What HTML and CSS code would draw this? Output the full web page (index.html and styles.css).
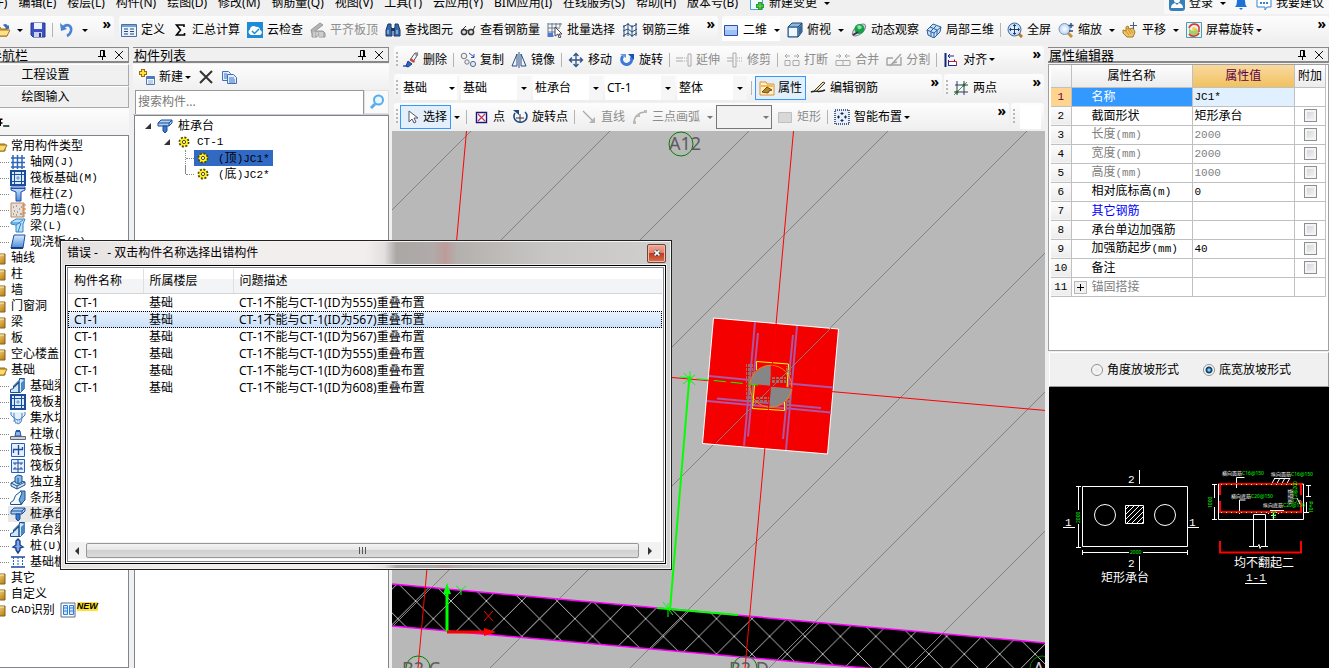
FILE: index.html
```html
<!DOCTYPE html>
<html lang="zh-CN">
<head>
    <meta charset="UTF-8">
    <title>构件列表</title>
    <link rel="stylesheet" href="styles.css">
</head>
<body>

<!-- icon library -->
<svg class="sprite" aria-hidden="true">
    <defs>
        <linearGradient id="gBlue" x1="0" y1="0" x2="0" y2="1"><stop offset="0" stop-color="#d8ecff"/><stop offset="1" stop-color="#4a8ad8"/></linearGradient>
        <linearGradient id="gGold" x1="0" y1="0" x2="1" y2="1"><stop offset="0" stop-color="#ffe9a0"/><stop offset="1" stop-color="#b87808"/></linearGradient>
        <radialGradient id="gGlass"><stop offset="0" stop-color="#ffffff"/><stop offset="1" stop-color="#b4d4f4"/></radialGradient>
    </defs>
    <symbol id="i-open" viewBox="0 0 16 16"><path d="M1 14V5h5l1 2h6v7z" fill="#f0c050" stroke="#a87010"/><path d="M1 14l3-6h12l-3 6z" fill="#ffe28a" stroke="#a87010"/><path d="M9 3c2-2 4-1 5 1l1-1v4h-4l1-1" fill="#3a6cc0"/></symbol>
    <symbol id="i-save" viewBox="0 0 16 16"><path d="M1 1h14v14H3l-2-2z" fill="#3c50c0" stroke="#283890"/><path d="M4 1h8v6H4z" fill="#eef2ff"/><path d="M4 10h8v5H4z" fill="#c8d0f0"/><path d="M9 11h2v4H9z" fill="#283890"/></symbol>
    <symbol id="i-undo" viewBox="0 0 16 16"><path d="M4 5c5-4 9-1 8 4-.5 2-2 4-4 5" fill="none" stroke="#4a82d4" stroke-width="2.6"/><path d="M1 1l1 8 6-2z" fill="#4a82d4"/></symbol>
    <symbol id="i-define" viewBox="0 0 16 16"><path d="M.5 2.5h15v12H.5z" fill="#e8f2fc" stroke="#4870a8"/><path d="M1 3h14v2H1z" fill="#7aa0d0"/><path d="M3 7h4M3 9.500h4M3 12h4M9 7h4M9 9.500h4M9 12h4" stroke="#284878"/></symbol>
    <symbol id="i-sum" viewBox="0 0 16 16"><path d="M12 5V3H4.500l4 5-4 5H12.500v-2" fill="none" stroke="#000" stroke-width="1.600"/></symbol>
    <symbol id="i-cloud" viewBox="0 0 16 16"><path d="M0 0h16v16H0z" fill="#1c8cd8"/><path d="M4 13a3 3 0 0 1-1-5.500A3.500 3.500 0 0 1 9 5a3 3 0 0 1 4 3 2.600 2.600 0 0 1 0 5z" fill="#fff"/><path d="M5 9l2.500 2.500L12 7" fill="none" stroke="#1c8cd8" stroke-width="1.500"/></symbol>
    <symbol id="i-slab" viewBox="0 0 16 16"><path d="M1 8l9-7 3 2-8 6h8l2 2v4H9v-2H7v2H2v-3z" fill="#b4b4b4" stroke="#989898"/><path d="M4 10v5M7 10v4M10 10v5M12 10v5" stroke="#e4e4e4"/></symbol>
    <symbol id="i-find" viewBox="0 0 16 16"><path d="M3 2h3v3l1 2v7H1V8zM10 2h3l2 6v6H9V7l1-2z" fill="#3868a8" stroke="#183868"/><path d="M6 6h4v3H6z" fill="#183868"/><path d="M3 8v4M12 8v4" stroke="#c8e0f8"/></symbol>
    <symbol id="i-glasses" viewBox="0 0 16 16"><circle cx="4" cy="10" r="2.600" fill="#dde" stroke="#333" stroke-width="1.500"/><circle cx="11" cy="10" r="2.600" fill="#dde" stroke="#333" stroke-width="1.500"/><path d="M6 9q1.500-1 3 0M2 8l4-4M13 8l2-4" fill="none" stroke="#333"/></symbol>
    <symbol id="i-batch" viewBox="0 0 16 16"><path d="M1 1v14M5 1v14M9 1v8M13 1v4M1 2h14M1 6h12M1 10h8M1 14h6" stroke="#68788c"/><path d="M1 11h5v4H1z" fill="#4878e0"/><path d="M8 5l7 7h-3l2 3-2 1-1-4-3 2z" fill="#fff" stroke="#445"/></symbol>
    <symbol id="i-rebar3d" viewBox="0 0 16 16"><path d="M2 3v12M6 1v13M10 3v12M14 1v13M1 5l5-3 4 3 5-3M1 9l5-2 4 3 5-3M1 14l5-3 4 3 5-3" fill="none" stroke="#284c80"/></symbol>
    <symbol id="i-rect" viewBox="0 0 16 16"><path d="M1.500 3.500h13v10h-13z" fill="#9cc0f8" stroke="#3050a8"/><path d="M2 4h12v4H2z" fill="#dceaff" opacity=".6"/></symbol>
    <symbol id="i-cube" viewBox="0 0 16 16"><path d="M1 5l4-4h10v9l-4 5H1z" fill="#88b8e0" stroke="#204870"/><path d="M1 5h10v10M11 5l4-4" fill="none" stroke="#204870"/><path d="M2 6h8v8H2z" fill="#f0f8ff"/><path d="M12 5l3-3v8l-3 4z" fill="#386898"/></symbol>
    <symbol id="i-orbit" viewBox="0 0 16 16"><ellipse cx="8" cy="8" rx="8" ry="4" transform="rotate(-40 8 8)" fill="#d4d8dc" stroke="#889"/><circle cx="8.500" cy="7" r="5" fill="#18a048"/><path d="M6 4q3-2 5 1-1 3-4 2" fill="#8ce0a0"/><path d="M2 13l5-3" stroke="#334" stroke-width="2"/></symbol>
    <symbol id="i-local" viewBox="0 0 16 16"><path d="M1 8l6-6 8 3-1 5-6 6-6-3z" fill="#c8e0f8" stroke="#2860a0"/><path d="M1 8l7 3 7-6M4 5l7 3v5M8 11v5M5 10v4M10 4l-6 6" fill="none" stroke="#2860a0"/></symbol>
    <symbol id="i-full" viewBox="0 0 16 16"><path d="M11 11l4 4" stroke="#b87828" stroke-width="3"/><circle cx="7.500" cy="7.500" r="6.500" fill="url(#gGlass)" stroke="#4c6c98"/><path d="M7.500 3v9M3 7.500h9M6 4l1.500-1.500L9 4M6 11l1.500 1.500L9 11M4 6L2.500 7.500 4 9M11 6l1.500 1.500L11 9" fill="none" stroke="#183c70"/></symbol>
    <symbol id="i-zoom" viewBox="0 0 16 16"><path d="M10 11l4 4" stroke="#c89038" stroke-width="3"/><circle cx="6.500" cy="7" r="5.500" fill="url(#gGlass)" stroke="#8098b8"/><path d="M13 1v5M10.500 3.500h5M11 9h4" stroke="#284c88" stroke-width="1.400"/></symbol>
    <symbol id="i-pan" viewBox="0 0 16 16"><path d="M1 8l3 1V5l2-1 1 3 4-1 2 4-2 5H5L1 11z" fill="#f0c468" stroke="#a87820"/><path d="M3 8l4 5M5 6l4 6M8 7l3 4" stroke="#c89030"/><path d="M11.500 0v7M8 3.500h7" stroke="#486080"/></symbol>
    <symbol id="i-rotscr" viewBox="0 0 16 16"><path d="M.5.500h15v15H.5z" fill="#e8f4f0" stroke="#48a0b8"/><path d="M3 13V6l3 3 4-3 3 4v3z" fill="#a0d070"/><path d="M3 6c2-5 8-5 10-1v5M13 11c-2 4-8 4-10 1" fill="none" stroke="#e03838" stroke-width="1.600"/><circle cx="8" cy="7" r="2" fill="#f8d048"/></symbol>
    <symbol id="i-brush" viewBox="0 0 16 16"><path d="M0 14h6" stroke="#2858b8" stroke-width="1.500"/><path d="M7 8l5-7 3 1-5 8z" fill="#f8f8ff" stroke="#556"/><path d="M12 1l3-1v3l-2 2z" fill="#889"/><path d="M8 6l4 3-1 2-4-3z" fill="#d04838"/><path d="M5 9l4 3-4 3-2-1z" fill="#2c64d0" stroke="#183c80"/></symbol>
    <symbol id="i-copy2" viewBox="0 0 16 16"><circle cx="4" cy="4" r="2.800" fill="#eee" stroke="#778"/><circle cx="7" cy="10" r="2.200" fill="#eee" stroke="#778"/><circle cx="13" cy="12" r="2.600" fill="#dde8f8" stroke="#556c90"/><path d="M9 1l5 4M14 2v3.500h-3" fill="none" stroke="#2858a8"/></symbol>
    <symbol id="i-mirror" viewBox="0 0 16 16"><path d="M6 2v12H1zM10 2v12h5z" fill="#eef4ff" stroke="#284c80"/><path d="M8 0v16" stroke="#284c80"/></symbol>
    <symbol id="i-move" viewBox="0 0 16 16"><path d="M8 2v12M2 8h12M5.500 4L8 1.500 10.500 4M5.500 12L8 14.500 10.500 12M4 5.500L1.500 8 4 10.500M12 5.500L14.500 8 12 10.500" fill="none" stroke="#2c548c" stroke-width="1.300"/></symbol>
    <symbol id="i-rotate" viewBox="0 0 16 16"><path d="M4 4a5 5 0 1 0 8 1" fill="none" stroke="#3c78d8" stroke-width="3"/><path d="M9 2h6v6z" fill="#1c50b0"/><path d="M1 2h6v4z" fill="#6898e0"/></symbol>
    <symbol id="i-extend" viewBox="0 0 16 16"><path d="M0 6h7M0 9h7M12 2v12h3V2z" fill="none" stroke="#aaa"/><path d="M8 6h3M8 9h3" stroke="#aaa" stroke-dasharray="1 1"/></symbol>
    <symbol id="i-trim" viewBox="0 0 16 16"><path d="M6 1v14h3V1zM0 6h6M0 9h6" fill="none" stroke="#aaa"/><path d="M10 6h6M10 9h6" stroke="#aaa" stroke-dasharray="1 1"/></symbol>
    <symbol id="i-break" viewBox="0 0 16 16"><path d="M1 4h5M10 4h5M3 2L1 4l2 2M13 2l2 2-2 2M1 8.500h5v5H1zM9 8.500h6v5H9z" fill="none" stroke="#aaa"/></symbol>
    <symbol id="i-join" viewBox="0 0 16 16"><path d="M1 4h5M10 4h5M4 2l2 2-2 2M12 2l-2 2 2 2M1 8.500h14v5H1zM8 8v5" fill="none" stroke="#aaa"/></symbol>
    <symbol id="i-split" viewBox="0 0 16 16"><path d="M1 6h6M1 6v7h14V5M4 14L15 2M7 11l4-1" fill="none" stroke="#a4a4a4" stroke-width="1.400"/></symbol>
    <symbol id="i-align" viewBox="0 0 16 16"><path d="M2.500 1v14" stroke="#102878" stroke-width="2"/><path d="M5.500 9.500h8v4h-8z" fill="#fff" stroke="#c02038"/><path d="M5 4h6M7 2L5 4l2 2M5.500 8v5.500h8M11.500 7.500v2" fill="none" stroke="#182890"/></symbol>
    <symbol id="i-props" viewBox="0 0 16 16"><path d="M1 2h6l1 2h7v11H1z" fill="#fff0d0" stroke="#e09028"/><path d="M2 5h12v2H2z" fill="#f8b850"/><path d="M3 12l5-5 5 3-3 1-1 2z" fill="#b88820" stroke="#6c4c10"/></symbol>
    <symbol id="i-pencil" viewBox="0 0 16 16"><path d="M1 12c4-2 9 1 14-2" fill="none" stroke="#222" stroke-width="1.500"/><path d="M4 11l9-9 2 1-8 8z" fill="#e8dcb0" stroke="#443820"/></symbol>
    <symbol id="i-twopt" viewBox="0 0 16 16"><path d="M4 1v14M11 1v14M1 12h14M2 5h13" stroke="#2c3c60"/><path d="M1 15L14 2" stroke="#40a040"/><circle cx="4" cy="12" r="1.500" fill="#286828"/><circle cx="11" cy="5" r="1.500" fill="#286828"/></symbol>
    <symbol id="i-arrow" viewBox="0 0 16 16"><path d="M5 2v11l3-3 2 4 2-1-2-4h4z" fill="#fff" stroke="#556"/></symbol>
    <symbol id="i-point" viewBox="0 0 16 16"><path d="M3.500 3.500h10v10h-10z" fill="#fff" stroke="#181878" stroke-width="1.400"/><path d="M5 5l7 7M12 5l-7 7" stroke="#c83060" stroke-width="1.300"/></symbol>
    <symbol id="i-rotpt" viewBox="0 0 16 16"><path d="M3 4a6.500 6 0 1 0 10-1" fill="none" stroke="#204880" stroke-width="1.600"/><path d="M1 1h6v5z" fill="#204880"/><path d="M8 5v8M4 9h8" stroke="#334"/></symbol>
    <symbol id="i-line" viewBox="0 0 16 16"><path d="M2 2l10 10" stroke="#a8a8a8" stroke-width="1.200"/><path d="M14 14H8l6-6z" fill="#b4b4b4"/></symbol>
    <symbol id="i-arc" viewBox="0 0 16 16"><path d="M2 14c0-6 4-11 12-11" fill="none" stroke="#b0b0b0" stroke-width="1.500"/><path d="M1 12h3v3H1zM5 5h3v3H5zM12 1h3v3h-3z" fill="#bbb"/></symbol>
    <symbol id="i-rectg" viewBox="0 0 16 16"><path d="M1.500 3.500h13v10h-13z" fill="#d8d8d8" stroke="#c0c0c0"/></symbol>
    <symbol id="i-smart" viewBox="0 0 16 16"><path d="M1 1h14v14H1z" fill="#e8f0fc" stroke="#183468" stroke-dasharray="1 1" stroke-width="1.500"/><path d="M8 3v3M6.500 4.500h3M8 10v3M6.500 11.500h3M3 8h3M4.500 6.500v3M10 8h3M11.500 6.500v3" stroke="#102450"/></symbol>
    <symbol id="i-newchg" viewBox="0 0 16 16"><path d="M1.500.500h12v14h-12z" fill="#f0f8ff" stroke="#48a0d8"/><path d="M11 7v8M7 11h8" stroke="#28a028" stroke-width="4"/><path d="M11 8v6M8 11h6" stroke="#70e060"/></symbol>
    <symbol id="i-user" viewBox="0 0 16 16"><rect width="16" height="16" rx="3" fill="#3880b8"/><circle cx="8" cy="5" r="3" fill="#fff"/><path d="M2 13q0-4 4-5l2 2 2-2q4 1 4 5z" fill="#fff"/></symbol>
    <symbol id="i-bell" viewBox="0 0 16 16"><path d="M2 12q2-2 2-6a4 4 0 0 1 8 0q0 4 2 6z" fill="#1c70d8"/><path d="M6 13h4l-2 2z" fill="#1c70d8"/></symbol>
    <symbol id="i-chat" viewBox="0 0 16 16"><path d="M1 1h14v11h-4l-2 3v-3H1z" fill="#fff" stroke="#3880d0"/><path d="M4 8h2M7 8h2M10 8h2" stroke="#3880d0" stroke-width="2"/></symbol>
    <symbol id="i-new" viewBox="0 0 16 16"><path d="M4 0v8M0 4h8" stroke="#987010" stroke-width="4"/><path d="M4 1v6M1 4h6" stroke="#ffe040" stroke-width="2"/><path d="M7.500 7.500h8v8h-8z" fill="#f4f8ff" stroke="#5078b0"/><path d="M8 8h7v2H8z" fill="#4878c8"/><path d="M9 12h5M9 14h5" stroke="#88a8d0"/></symbol>
    <symbol id="i-del" viewBox="0 0 16 16"><path d="M2 2l12 12M14 2L2 14" stroke="#333" stroke-width="2"/></symbol>
    <symbol id="i-copy" viewBox="0 0 16 16"><path d="M1.500 2.500h6l2 2v7h-8z" fill="#e0eeff" stroke="#4070b8"/><path d="M6.500 5.500h6l3 3v6h-9z" fill="#e0eeff" stroke="#4070b8"/><path d="M8 9h5M8 11h6M8 13h6M3 5h3M3 7h3M3 9h3" stroke="#4070b8"/></symbol>
    <symbol id="i-search" viewBox="0 0 16 16"><circle cx="9.500" cy="6" r="4.500" fill="#e8f6ff" stroke="#58acec" stroke-width="2"/><path d="M6 10l-4 4" stroke="#58acec" stroke-width="3"/></symbol>
    <symbol id="i-pin" viewBox="0 0 10 10"><path d="M3.500.500h4v6h-4zM1 6.500h8M5.500 6v4M6.500 0v6" fill="none" stroke="#000"/></symbol>
    <symbol id="i-x" viewBox="0 0 10 10"><path d="M1 1l8 8M9 1L1 9" stroke="#111"/></symbol>
    <symbol id="t-open" viewBox="0 0 16 16"><path d="M1 13V4h5l1 2h6v7z" fill="#f0c050" stroke="#907020"/><path d="M2 13l3-6h10l-3 6z" fill="#ffd868" stroke="#907020"/></symbol>
    <symbol id="t-folder" viewBox="0 0 16 16"><path d="M2 4h11v10H2z" fill="url(#gGold)" stroke="#806020"/><path d="M3 5h9" stroke="#fff0b0"/></symbol>
    <symbol id="t-grid" viewBox="0 0 16 16"><path d="M3 1v14M7.500 1v14M12 1v14M1 4h14M1 8.500h14M1 13h14" stroke="#2c68b8" stroke-width="1.500"/></symbol>
    <symbol id="t-raft" viewBox="0 0 16 16"><path d="M1 1h14v14H1z" fill="#d8ecff" stroke="#1c4c98" stroke-width="2"/><path d="M4.500 2v12M11.500 2v12M2 4.500h12M2 11.500h12" stroke="#1c4c98"/><path d="M6 8h4M8 6v4" stroke="#6894cc"/></symbol>
    <symbol id="t-col" viewBox="0 0 16 16"><path d="M1 1h14v3l-4 2v9H6V6L1 4z" fill="url(#gBlue)" stroke="#2048b0"/><path d="M1 2.500h14" stroke="#2048b0"/></symbol>
    <symbol id="t-wall" viewBox="0 0 16 16"><path d="M1 1h13v14H1z" fill="#e8e0d8" stroke="#b88860"/><path d="M3 5h1M6 4h1M9 7h1M4 9h1M7 10h1M11 5h1M3 12h1M10 12h2M6 13h1" stroke="#665" /><path d="M13 2v13M13 3h3M13 7h3M13 11h3" stroke="#d08040"/></symbol>
    <symbol id="t-beam" viewBox="0 0 16 16"><path d="M1 4l5-3h9l-2 5v8H6V7L1 6z" fill="#b8e0fc" stroke="#3084c8"/><path d="M6 7l7-5M8 14l3-9M1 5h9" stroke="#3084c8"/></symbol>
    <symbol id="t-slab" viewBox="0 0 16 16"><path d="M4 1h11l-2 13H1z" fill="url(#gBlue)" stroke="#204c98"/><path d="M1 14h12" stroke="#183c80" stroke-width="2"/></symbol>
    <symbol id="t-fbeam" viewBox="0 0 16 16"><path d="M.5 14.500v-3l3-1V8l6-6V.500h5v10l-4 4z" fill="#d0e8fc" stroke="#1c508c"/><path d="M10 1h5v9l-4 4V5l3-3" fill="#4888c4"/><path d="M4 9l5-5v10" fill="none" stroke="#1c508c" stroke-width="1.500"/></symbol>
    <symbol id="t-pit" viewBox="0 0 16 16"><path d="M1 2v3l3 3q0 5 4 6 4-1 4-6l3-3V2M4 3v4q1 3 4 3t4-3V3" fill="#e4f0fc" stroke="#4880c0"/><path d="M3 11h10M5 13h6" stroke="#68a0d8" stroke-dasharray="1 1"/></symbol>
    <symbol id="t-pier" viewBox="0 0 16 16"><path d="M.5 10.500h15v3H.5z" fill="#d0d0d0" stroke="#667"/><path d="M5 10l1-5h4l1 5z" fill="#88b4e8" stroke="#2458a8"/><path d="M6 5h4" stroke="#2458a8" stroke-width="2"/></symbol>
    <symbol id="t-main" viewBox="0 0 16 16"><path d="M1.500 1.500h13v13h-13z" fill="#e4f0ff" stroke="#2860b8"/><path d="M8.500 3v10M3.500 11V7.500h9V5" fill="none" stroke="#1c4c98" stroke-width="1.300"/></symbol>
    <symbol id="t-neg" viewBox="0 0 16 16"><path d="M1.500 1.500h13v13h-13z" fill="#e4f0ff" stroke="#2860b8"/><path d="M8 1v14M3 5h10M3 11h10M5 5v2M11 5v2M5 11V9M11 11V9" stroke="#1c4c98"/></symbol>
    <symbol id="t-iso" viewBox="0 0 16 16"><path d="M1 9l6-3 8 2v3l-8 4-6-3z" fill="#d0e4f8" stroke="#1c508c"/><path d="M5 3l3-2 4 1v6l-4 2-3-2z" fill="#88bce8" stroke="#1c508c"/><path d="M8 4v6M1 9l6 3 8-4M7 12v3" fill="none" stroke="#1c508c"/></symbol>
    <symbol id="t-strip" viewBox="0 0 16 16"><path d="M.5 14.500v-2l3-2 2-5 5-4h4v8l-3 5z" fill="#f4faff" stroke="#1c508c"/><path d="M10 1h5v9l-4 4-2-4 3-7z" fill="#6ca4d8" stroke="#1c508c"/></symbol>
    <symbol id="t-cap" viewBox="0 0 16 16"><path d="M1 5l3-3h11v3l-3 3H1z" fill="#a8d0f4" stroke="#1c4c98"/><path d="M1 5h11l3-3M12 5v3" fill="none" stroke="#1c4c98"/><path d="M6 8h4v5l-2 2-2-2z" fill="#3c78c8" stroke="#1c4c98"/></symbol>
    <symbol id="t-pile" viewBox="0 0 16 16"><path d="M8 1l2 2v4l3 2-3 1v2l-2 3-2-3v-2L3 9l3-2V3z" fill="#80a8e0" stroke="#1c4090" stroke-width="1.400"/></symbol>
    <symbol id="t-band" viewBox="0 0 16 16"><path d="M1 3h14M1 13h14" stroke="#1c4c98" stroke-width="1.500"/><path d="M3.500 3v10M8 3v10M12.500 3v10" stroke="#2860b8" stroke-dasharray="2 1"/></symbol>
    <symbol id="t-cad" viewBox="0 0 16 16"><path d="M1 1h14v14H1z" fill="#fff" stroke="#606878"/><path d="M3.500 3.500h4v9h-4zM9.500 3.500h4v9h-4z" fill="#d0e8ff" stroke="#2c80d8"/><path d="M4 6h3M4 9h3M10 6h3M10 9h3" stroke="#2c80d8"/></symbol>
    <symbol id="t-gear" viewBox="0 0 12 12"><circle cx="6" cy="6" r="4.500" fill="#ffee20" stroke="#504800" stroke-width="2" stroke-dasharray="2 1.500"/><circle cx="6" cy="6" r="3.600" fill="#fff020"/><circle cx="6" cy="6" r="1.600" fill="#fff" stroke="#504800"/></symbol>
    <symbol id="t-exp" viewBox="0 0 8 8"><path d="M7 1v6H1z" fill="#333"/></symbol>
</svg>

<nav class="menubar">
    <button>文件(F)</button>
    <button>编辑(E)</button>
    <button>楼层(L)</button>
    <button>构件(N)</button>
    <button>绘图(D)</button>
    <button>修改(M)</button>
    <button>钢筋量(Q)</button>
    <button>视图(V)</button>
    <button>工具(T)</button>
    <button>云应用(Y)</button>
    <button>BIM应用(I)</button>
    <button>在线服务(S)</button>
    <button>帮助(H)</button>
    <button>版本号(B)</button>
    <button class="tool"><svg><use href="#i-newchg"/></svg>新建变更<i class="caret"></i></button>
    <div class="account">
        <button class="tool"><svg><use href="#i-user"/></svg>登录<i class="caret"></i></button>
        <button class="tool" aria-label="消息"><svg><use href="#i-bell"/></svg></button>
        <button class="tool"><svg><use href="#i-chat"/></svg>我要建议</button>
    </div>
</nav>

<div class="main-tools">
    <div class="bar bar-file">
        <button class="tool" aria-label="打开"><svg><use href="#i-open"/></svg><i class="caret"></i></button>
        <button class="tool" aria-label="保存"><svg><use href="#i-save"/></svg></button>
        <i class="sep"></i>
        <button class="tool" aria-label="撤销"><svg><use href="#i-undo"/></svg><i class="caret"></i></button>
        <button class="more">»</button>
    </div>
    <div class="bar bar-calc">
        <button class="tool"><svg><use href="#i-define"/></svg>定义</button>
        <button class="tool"><svg><use href="#i-sum"/></svg>汇总计算</button>
        <button class="tool"><svg><use href="#i-cloud"/></svg>云检查</button>
        <button class="tool off"><svg><use href="#i-slab"/></svg>平齐板顶</button>
        <button class="tool"><svg><use href="#i-find"/></svg>查找图元</button>
        <button class="tool"><svg><use href="#i-glasses"/></svg>查看钢筋量</button>
        <button class="tool"><svg><use href="#i-batch"/></svg>批量选择</button>
        <button class="tool"><svg><use href="#i-rebar3d"/></svg>钢筋三维</button>
        <button class="more">»</button>
    </div>
    <div class="bar bar-view">
        <button class="tool white"><svg><use href="#i-rect"/></svg>二维<i class="caret"></i></button>
        <button class="tool"><svg><use href="#i-cube"/></svg>俯视<i class="caret"></i></button>
        <button class="tool"><svg><use href="#i-orbit"/></svg>动态观察</button>
        <button class="tool"><svg><use href="#i-local"/></svg>局部三维</button>
        <i class="sep"></i>
        <button class="tool"><svg><use href="#i-full"/></svg>全屏</button>
        <button class="tool"><svg><use href="#i-zoom"/></svg>缩放<i class="caret"></i></button>
        <button class="tool"><svg><use href="#i-pan"/></svg>平移<i class="caret"></i></button>
        <button class="tool"><svg><use href="#i-rotscr"/></svg>屏幕旋转<i class="caret near"></i></button>
        <button class="more">»</button>
    </div>
</div>

<main class="work">

    <!-- module navigation -->
    <aside class="panel nav-panel">
        <header class="panel-title"><h2>模块导航栏</h2><button aria-label="固定"><svg><use href="#i-pin"/></svg></button><button aria-label="关闭"><svg><use href="#i-x"/></svg></button></header>
        <button class="nav-btn">工程设置</button>
        <button class="nav-btn">绘图输入</button>
        <div class="nav-strip"><svg viewBox="0 0 16 16"><path d="M1 3h5M3 3v9M3 8h3M7 12h8" fill="none" stroke="#000" stroke-width="2"/><path d="M8 12h6" stroke="#189090"/></svg></div>
        <ul class="nav-tree">
            <li><svg><use href="#t-open"/></svg>常用构件类型</li>
            <li class="leaf"><svg><use href="#t-grid"/></svg>轴网<kbd>(J)</kbd></li>
            <li class="leaf"><svg><use href="#t-raft"/></svg>筏板基础<kbd>(M)</kbd></li>
            <li class="leaf"><svg><use href="#t-col"/></svg>框柱<kbd>(Z)</kbd></li>
            <li class="leaf"><svg><use href="#t-wall"/></svg>剪力墙<kbd>(Q)</kbd></li>
            <li class="leaf"><svg><use href="#t-beam"/></svg>梁<kbd>(L)</kbd></li>
            <li class="leaf"><svg><use href="#t-slab"/></svg>现浇板<kbd>(B)</kbd></li>
            <li><svg><use href="#t-folder"/></svg>轴线</li>
            <li><svg><use href="#t-folder"/></svg>柱</li>
            <li><svg><use href="#t-folder"/></svg>墙</li>
            <li><svg><use href="#t-folder"/></svg>门窗洞</li>
            <li><svg><use href="#t-folder"/></svg>梁</li>
            <li><svg><use href="#t-folder"/></svg>板</li>
            <li><svg><use href="#t-folder"/></svg>空心楼盖</li>
            <li><svg><use href="#t-open"/></svg>基础</li>
            <li class="leaf"><svg><use href="#t-fbeam"/></svg>基础梁</li>
            <li class="leaf"><svg><use href="#t-raft"/></svg>筏板基础</li>
            <li class="leaf"><svg><use href="#t-pit"/></svg>集水坑</li>
            <li class="leaf"><svg><use href="#t-pier"/></svg>柱墩<kbd>(Y)</kbd></li>
            <li class="leaf"><svg><use href="#t-main"/></svg>筏板主筋</li>
            <li class="leaf"><svg><use href="#t-neg"/></svg>筏板负筋</li>
            <li class="leaf"><svg><use href="#t-iso"/></svg>独立基础</li>
            <li class="leaf"><svg><use href="#t-strip"/></svg>条形基础</li>
            <li class="leaf hot"><svg><use href="#t-cap"/></svg>桩承台</li>
            <li class="leaf"><svg><use href="#t-fbeam"/></svg>承台梁</li>
            <li class="leaf"><svg><use href="#t-pile"/></svg>桩<kbd>(U)</kbd></li>
            <li class="leaf"><svg><use href="#t-band"/></svg>基础板带</li>
            <li><svg><use href="#t-folder"/></svg>其它</li>
            <li><svg><use href="#t-folder"/></svg>自定义</li>
            <li><svg><use href="#t-folder"/></svg><kbd>CAD</kbd>识别<svg class="cad-icon"><use href="#t-cad"/></svg><b class="new">NEW</b></li>
        </ul>
    </aside>

    <!-- component list -->
    <aside class="panel list-panel">
        <header class="panel-title"><h2>构件列表</h2><button aria-label="固定"><svg><use href="#i-pin"/></svg></button><button aria-label="关闭"><svg><use href="#i-x"/></svg></button></header>
        <div class="list-tools">
            <button class="tool"><svg><use href="#i-new"/></svg>新建<i class="caret near"></i></button>
            <button class="tool" aria-label="删除"><svg><use href="#i-del"/></svg></button>
            <button class="tool" aria-label="复制"><svg><use href="#i-copy"/></svg></button>
        </div>
        <div class="search">
            <input type="text" placeholder="搜索构件..." aria-label="搜索构件">
            <button aria-label="搜索"><svg><use href="#i-search"/></svg></button>
        </div>
        <ul class="comp-tree">
            <li class="lv1"><svg class="exp"><use href="#t-exp"/></svg><svg><use href="#t-cap"/></svg>桩承台</li>
            <li class="lv2"><svg class="exp"><use href="#t-exp"/></svg><svg class="gear"><use href="#t-gear"/></svg><kbd>CT-1</kbd></li>
            <li class="lv3"><span class="item picked"><svg class="gear"><use href="#t-gear"/></svg><span><kbd>(</kbd>顶<kbd>)JC1*</kbd></span></span></li>
            <li class="lv3"><span class="item"><svg class="gear"><use href="#t-gear"/></svg><span><kbd>(</kbd>底<kbd>)JC2*</kbd></span></span></li>
        </ul>
    </aside>

    <!-- drawing area -->
    <section class="draw">
        <div class="row row-edit">
            <div class="bar">
                <i class="grip"></i>
                <button class="tool"><svg><use href="#i-brush"/></svg>删除</button>
                <i class="sep"></i>
                <button class="tool"><svg><use href="#i-copy2"/></svg>复制</button>
                <button class="tool"><svg><use href="#i-mirror"/></svg>镜像</button>
                <i class="sep"></i>
                <button class="tool"><svg><use href="#i-move"/></svg>移动</button>
                <button class="tool"><svg><use href="#i-rotate"/></svg>旋转</button>
                <i class="sep"></i>
                <button class="tool off"><svg><use href="#i-extend"/></svg>延伸</button>
                <button class="tool off"><svg><use href="#i-trim"/></svg>修剪</button>
                <i class="sep"></i>
                <button class="tool off"><svg><use href="#i-break"/></svg>打断</button>
                <button class="tool off"><svg><use href="#i-join"/></svg>合并</button>
                <button class="tool off"><svg><use href="#i-split"/></svg>分割</button>
                <i class="sep"></i>
                <button class="tool"><svg><use href="#i-align"/></svg>对齐<i class="caret near"></i></button>
                <button class="more">»</button>
            </div>
        </div>
        <div class="row">
            <div class="bar">
                <i class="grip"></i>
                <div class="combos">
                    <span class="combo first"><select aria-label="楼层"><option>基础</option></select><i class="caret"></i></span>
                    <span class="combo"><select aria-label="构件大类"><option>基础</option></select><i class="caret"></i></span>
                    <span class="combo"><select aria-label="构件类型"><option>桩承台</option></select><i class="caret"></i></span>
                    <span class="combo"><select aria-label="构件"><option>CT-1</option></select><i class="caret"></i></span>
                    <span class="combo"><select aria-label="单元"><option>整体</option></select><i class="caret"></i></span>
                </div>
                <i class="sep"></i>
                <button class="tool pressed"><svg><use href="#i-props"/></svg>属性</button>
                <button class="tool"><svg><use href="#i-pencil"/></svg>编辑钢筋</button>
                <button class="more">»</button>
            </div>
            <div class="bar bar-axis">
                <i class="grip"></i>
                <button class="tool"><svg><use href="#i-twopt"/></svg>两点</button>
                <button class="more">»</button>
            </div>
        </div>
        <div class="row row-last">
            <div class="bar">
                <i class="grip"></i>
                <button class="tool pressed"><svg><use href="#i-arrow"/></svg>选择</button>
                <i class="caret solo"></i>
                <i class="sep"></i>
                <button class="tool"><svg><use href="#i-point"/></svg>点</button>
                <button class="tool"><svg><use href="#i-rotpt"/></svg>旋转点</button>
                <i class="sep"></i>
                <button class="tool off"><svg><use href="#i-line"/></svg>直线</button>
                <button class="tool off"><svg><use href="#i-arc"/></svg>三点画弧<i class="caret"></i></button>
                <span class="combo boxed off"><select aria-label="画弧方式"><option></option></select><i class="caret"></i></span>
                <button class="tool off"><svg><use href="#i-rectg"/></svg>矩形</button>
                <i class="sep"></i>
                <button class="tool"><svg><use href="#i-smart"/></svg>智能布置<i class="caret near"></i></button>
                <button class="more">»</button>
            </div>
            <div class="bar bar-tail"><i class="grip"></i><span class="blank"></span></div>
        </div>

        <div class="canvas">
            <svg viewBox="392 131 654 537" preserveAspectRatio="xMinYMin slice">
                <defs>
                    <pattern id="hatch" patternUnits="userSpaceOnUse" x="451" y="601" width="35.4" height="35.4">
                        <path d="M0 0L35.4 35.400M35.400 0L0 35.400" stroke="#e8e8e8" stroke-width=".8"/>
                    </pattern>
                    <pattern id="speck" patternUnits="userSpaceOnUse" width="4" height="4">
                        <path d="M0 0h3v3H0z" fill="#94716c"/>
                    </pattern>
                </defs>

                <!-- concrete strip -->
                <path d="M392 584L1046 643V684L392 626z" fill="#000"/>
                <path d="M392 584L1046 643V684L392 626z" fill="url(#hatch)"/>

                <path class="guide" d="M392 210L471 131M392 349L610 131M392 488L749 131M392 627L888 131M490 668L1027 131M630 668L1046 252M769 668L1046 391M908 668L1046 530"/>
                <path class="edge" d="M392 584L1046 643M392 626L1046 684"/>

                <!-- pile cap -->
                <path d="M713.500 318L838.500 329L827.500 454L702.500 443.500z" fill="#f40000" stroke="#fff"/>
                <path class="bars" d="M755 322L744 445.500M758 333L748 436.500M797 326L786 450M793 335L783 439M709 376L750 380M788 383.500L833 387.500M717 398.500L821 408M707 401L831 412.500"/>
                <path d="M746 364h7v38h-7zM771 377h15v6h-15zM755 397h15v7h-15zM786 366h5v10h-5zM786 396h5v10h-5z" fill="url(#speck)"/>
                <path d="M770.700 386.300V365.300A21 21 0 0 0 750 384.500zM770.700 386.800L791.700 387.500A21 21 0 0 1 769.500 407.300z" fill="#868686"/>
                <circle cx="770.700" cy="386.300" r="21" fill="none" stroke="#ff8000"/>
                <path d="M756.500 370V361.500L788.500 364L787 388M754.500 385L752.500 408.500L784.500 410.500V402" fill="none" stroke="#ff0"/>
                <path class="guide" d="M831 328L716 443"/>

                <!-- axis lines -->
                <path class="axis" d="M466.500 131L418 668M793.500 131L745 668M672 377.500L1046 410.500"/>
                <path d="M680 377L758 385" stroke="#0f0" stroke-dasharray="12 5" fill="none"/>
                <path d="M689.500 376L670 610" stroke="#0f0" stroke-width="2"/>
                <path d="M657 608L738 615" stroke="#0f0" stroke-width="2"/>
                <path d="M690 371v12M684 373l11 12M695 375l-12 9M668 603v14M663 602l10 13" stroke="#0f0"/>

                <!-- axis marks -->
                <circle class="ring" cx="681" cy="144" r="12"/>
                <circle class="ring" cx="418" cy="668" r="12"/>
                <circle class="ring" cx="745" cy="668" r="12"/>
                <circle class="ring" cx="1042" cy="668" r="12"/>
                <text class="mark" x="669" y="150">A12</text>
                <text class="mark" x="402" y="675">B2 C</text>
                <text class="mark" x="729" y="675">B2 D</text>
                <text class="mark light" x="1033" y="675">A</text>

                <!-- origin -->
                <path d="M447 632V592" stroke="#0f0" stroke-width="3"/>
                <path d="M447 583l4 11h-8z" fill="#0f0"/>
                <path d="M447 632H486" stroke="red" stroke-width="3"/>
                <path d="M496 632l-12-4v8z" fill="red"/>
                <path d="M456 586l5 4 5-4M461 590v5" stroke="#0f0" fill="none"/>
                <path d="M484 611l9 10M493 611l-9 10" stroke="red"/>
            </svg>
        </div>
    </section>

    <!-- property editor -->
    <aside class="panel prop-panel">
        <header class="panel-title"><h2>属性编辑器</h2><button aria-label="固定"><svg><use href="#i-pin"/></svg></button><button aria-label="关闭"><svg><use href="#i-x"/></svg></button></header>
        <div class="prop-box">
            <table class="props">
                <colgroup><col class="c-no"><col class="c-name"><col class="c-val"><col class="c-add"></colgroup>
                <thead>
                    <tr><th></th><th>属性名称</th><th class="val-head">属性值</th><th>附加</th></tr>
                </thead>
                <tbody>
                    <tr class="current"><th>1</th><td>名称</td><td><kbd>JC1*</kbd></td><td></td></tr>
                    <tr><th>2</th><td>截面形状</td><td>矩形承台</td><td><input type="checkbox" aria-label="附加 截面形状"></td></tr>
                    <tr class="dim"><th>3</th><td>长度<kbd>(mm)</kbd></td><td><kbd>2000</kbd></td><td><input type="checkbox" aria-label="附加 长度"></td></tr>
                    <tr class="dim"><th>4</th><td>宽度<kbd>(mm)</kbd></td><td><kbd>2000</kbd></td><td><input type="checkbox" aria-label="附加 宽度"></td></tr>
                    <tr class="dim"><th>5</th><td>高度<kbd>(mm)</kbd></td><td><kbd>1000</kbd></td><td><input type="checkbox" aria-label="附加 高度"></td></tr>
                    <tr><th>6</th><td>相对底标高<kbd>(m)</kbd></td><td><kbd>0</kbd></td><td><input type="checkbox" aria-label="附加 相对底标高"></td></tr>
                    <tr class="link"><th>7</th><td>其它钢筋</td><td></td><td></td></tr>
                    <tr><th>8</th><td>承台单边加强筋</td><td></td><td><input type="checkbox" aria-label="附加 承台单边加强筋"></td></tr>
                    <tr><th>9</th><td>加强筋起步<kbd>(mm)</kbd></td><td><kbd>40</kbd></td><td><input type="checkbox" aria-label="附加 加强筋起步"></td></tr>
                    <tr><th>10</th><td>备注</td><td></td><td><input type="checkbox" aria-label="附加 备注"></td></tr>
                    <tr class="dim group"><th>11</th><td><button class="plus" aria-label="展开"></button>锚固搭接</td><td></td><td></td></tr>
                </tbody>
            </table>
        </div>
        <div class="slope">
            <label><input type="radio" name="slope">角度放坡形式</label>
            <label><input type="radio" name="slope" checked>底宽放坡形式</label>
        </div>
        <div class="preview">
            <svg viewBox="1049 387 280 281" preserveAspectRatio="xMinYMin meet">
                <defs>
                    <pattern id="diag" patternUnits="userSpaceOnUse" width="5" height="5"><path d="M0 5L5 0" stroke="#fff"/></pattern>
                </defs>
                <!-- plan -->
                <g class="cad">
                    <path d="M1082.500 486.500h105v60h-105z"/>
                    <circle cx="1105" cy="515" r="10.500"/>
                    <circle cx="1165" cy="515" r="10.500"/>
                    <path d="M1125.500 505.500h18v18h-18z" fill="url(#diag)"/>
                    <path d="M1139.500 470v14M1139.500 556v15M1063 527.500h12M1188 527.500h11M1078.500 486v24M1078.500 524v24M1076 486.500h5M1076 547.500h5M1082 552.500h47M1143 552.500h45M1082.500 550v5M1187.500 550v5"/>
                </g>
                <text class="num" x="1128" y="483">2</text>
                <text class="num" x="1128" y="567">2</text>
                <text class="num" x="1065" y="526">1</text>
                <text class="num" x="1189" y="526">1</text>
                <text class="tiny g" x="1130" y="554">2000</text>
                <text class="tiny g" transform="translate(1080 523) rotate(-90)">2000</text>
                <text class="cap" x="1101" y="582">矩形承台</text>

                <!-- section -->
                <g class="cad">
                    <path d="M1218.500 484v35.500h85V484z"/>
                    <path d="M1253.500 547V514.500h12V547M1249 546.500h9l1-2 1 4 1-2h7"/>
                    <path d="M1214.500 484v14M1214.500 507v12M1212 484.500h5M1212 519.500h5M1308.500 485v11M1306 485.500h5M1306 496.500h5M1306.500 502v11M1304 512.500h5M1273.500 510v10M1271 515.500h5"/>
                    <path d="M1236.500 488v-10.500h8M1239.500 514v-14h6M1274 478.500h16M1275 478l-4 7M1280 478l-4 7M1285 478l-4 7M1290 478l-4 7M1270 510.500h14M1271 510l-3 4M1276 510l-3 4M1281 510l-3 4M1297 498l3 6v-4"/>
                </g>
                <path class="rebar" d="M1220 495v-11h81v11M1220 501v11h81v-11M1220 541v11.500h81v-11.500"/>
                <path d="M1221 484.500h80M1221 512.500h80" stroke="#ff0" stroke-dasharray="1 4"/>
                <text class="tiny" x="1222" y="475">横向面筋<tspan class="g">C16@150</tspan></text>
                <text class="tiny" x="1271" y="476">纵向面筋<tspan class="g">C16@150</tspan></text>
                <text class="tiny" x="1231" y="498">横向底筋<tspan class="g">C20@150</tspan></text>
                <text class="tiny" x="1263" y="507">纵向底筋<tspan class="g">C20@150</tspan></text>
                <text class="tiny g" transform="translate(1212 508) rotate(-90)">1000</text>
                <text class="tiny g" transform="translate(1313 513) rotate(-90)">10*d</text>
                <text class="tiny g" transform="translate(1276 519) rotate(-90)">100</text>
                <text class="tiny" transform="translate(1292 504) rotate(-90)">侧面筋</text>
                <text class="tiny g" transform="translate(1297 503) rotate(-90)">C12@200</text>
                <text class="cap" x="1234" y="567">均不翻起二</text>
                <text class="num" x="1246" y="581">1-1</text>
                <path class="cad" d="M1245 583.500h22"/>
            </svg>
        </div>
    </aside>
</main>

<!-- error window -->
<section class="dialog" role="dialog" aria-label="错误">
    <header><h1>错误 -&nbsp;&nbsp; - 双击构件名称选择出错构件</h1>
        <button class="close" aria-label="关闭"><svg viewBox="0 0 10 10"><path d="M2 2l6 6M8 2L2 8" stroke="#445" stroke-width="4"/><path d="M2 2l6 6M8 2L2 8" stroke="#fff" stroke-width="2"/></svg></button></header>
    <div class="dialog-body">
        <table class="errors">
            <thead><tr><th class="e-name">构件名称</th><th class="e-floor">所属楼层</th><th>问题描述</th></tr></thead>
            <tbody>
                <tr><td>CT-1</td><td>基础</td><td>CT-1不能与CT-1(ID为555)重叠布置</td></tr>
                <tr class="picked"><td>CT-1</td><td>基础</td><td>CT-1不能与CT-1(ID为567)重叠布置</td></tr>
                <tr><td>CT-1</td><td>基础</td><td>CT-1不能与CT-1(ID为567)重叠布置</td></tr>
                <tr><td>CT-1</td><td>基础</td><td>CT-1不能与CT-1(ID为555)重叠布置</td></tr>
                <tr><td>CT-1</td><td>基础</td><td>CT-1不能与CT-1(ID为608)重叠布置</td></tr>
                <tr><td>CT-1</td><td>基础</td><td>CT-1不能与CT-1(ID为608)重叠布置</td></tr>
            </tbody>
        </table>
        <div class="scroll">
            <button aria-label="向左"><svg viewBox="0 0 8 8"><path d="M6 0v8L2 4z" fill="#333"/></svg></button>
            <div class="thumb"><i></i><i></i><i></i></div>
            <button aria-label="向右"><svg viewBox="0 0 8 8"><path d="M2 0v8l4-4z" fill="#333"/></svg></button>
        </div>
    </div>
</section>

</body>
</html>
```

FILE: styles.css
```css
* {
    box-sizing: border-box;
}

body {
    margin: 0;
    height: 100vh;
    overflow: hidden;
    display: flex;
    flex-direction: column;
    background: #f0f0f0;
    color: #000;
    font: 12px/16px "Noto Sans", "Noto Sans CJK SC", sans-serif;
}

button,
input,
select {
    font: inherit;
    color: inherit;
    margin: 0;
    padding: 0;
    border: 0;
    background: none;
}

ul {
    list-style: none;
    margin: 0;
    padding: 0;
}

h1, h2 {
    margin: 0;
    font-weight: normal;
}

kbd {
    font: 11px/16px "Liberation Mono", monospace;
}

.sprite {
    position: absolute;
    width: 0;
    height: 0;
}

/* menu bar */
.menubar {
    flex: none;
    display: flex;
    align-items: center;
    gap: 11px;
    height: 26px;
    margin: -10px 0 0 -30px;
    white-space: nowrap;
}

.account {
    display: flex;
    gap: 7px;
    margin-left: auto;
    padding: 0 5px;
    background: #f8f8f8;
}

/* toolbars */
.main-tools {
    flex: none;
    display: flex;
    height: 28px;
    margin-bottom: 2px;
}

.bar {
    display: flex;
    align-items: center;
    gap: 7px;
    flex: 1;
    min-width: 0;
    padding: 0 3px 0 2px;
    border-radius: 3px;
    background: linear-gradient(#fdfdfd, #f4f4f4 60%, #eeeeee);
    white-space: nowrap;
}

.bar-file {
    flex: none;
    width: 122px;
    margin: 0 5px 0 -8px;
}

.bar-calc {
    flex: none;
    width: 599px;
    margin-right: 4px;
}

.bar-view {
    padding-left: 0;
}

.tool {
    display: flex;
    align-items: center;
    gap: 4px;
    flex: none;
    height: 22px;
}

.tool svg {
    width: 16px;
    height: 16px;
}

.off {
    color: #8c8c8c;
}

.white {
    background: #fff;
    padding-left: 1px;
}

.pressed {
    height: 24px;
    margin: 0 -3px;
    padding: 0 3px;
    gap: 3px;
    border: 1px solid #3399ff;
    background: #e3effb;
}

.caret {
    flex: none;
    margin-left: 3px;
    border: 3px solid transparent;
    border-top-color: #000;
    border-bottom: 0;
}

.off .caret {
    border-top-color: #777;
}

.caret.near {
    margin-left: -2px;
}

.caret.solo {
    margin-left: -1px;
}

.sep {
    flex: none;
    width: 1px;
    height: 14px;
    margin: 0 -1px;
    background: #b4b4b4;
}

.grip {
    flex: none;
    width: 2px;
    height: 16px;
    margin-right: -2px;
    background: repeating-linear-gradient(#b8b8b8 0 2px, transparent 2px 4px);
}

.more {
    align-self: flex-start;
    margin-left: auto;
    font-size: 14px;
    line-height: 16px;
    font-weight: bold;
}

/* work area */
.work {
    flex: 1;
    min-height: 0;
    display: grid;
    grid-template-columns: 130px 256px minmax(0, 1fr) 281px;
    column-gap: 3px;
}

.panel {
    display: flex;
    flex-direction: column;
    min-width: 0;
    min-height: 0;
    padding-top: 1px;
}

.panel-title {
    flex: none;
    display: flex;
    align-items: center;
    gap: 7px;
    height: 16px;
    margin-bottom: 1px;
    padding: 0 4px 0 1px;
    border: solid #888;
    border-width: 1px 1px 2px 0;
}

.panel-title h2 {
    flex: 1;
    font-size: 13px;
    line-height: 14px;
}

.panel-title button {
    display: flex;
}

.panel-title svg {
    width: 10px;
    height: 10px;
}

.nav-panel {
    margin-left: -38px;
    padding-right: 1px;
}

.nav-btn {
    flex: none;
    height: 22px;
    border: 1px solid #aaa;
    border-top-color: #fff;
    background: #f0f0f0;
}

.nav-strip {
    flex: none;
    height: 27px;
    padding: 9px 34px;
    background: linear-gradient(#fcfcfc, #f2f2f2);
}

.nav-strip svg {
    width: 16px;
    height: 12px;
}

.nav-tree {
    flex: 1;
    min-height: 0;
    overflow: hidden;
    padding: 2px 0 0 29px;
    border: 1px solid #80848c;
    background: #fff;
    white-space: nowrap;
}

.nav-tree li {
    display: flex;
    align-items: center;
    height: 16px;
}

.nav-tree svg {
    flex: none;
    width: 16px;
    height: 16px;
    margin-right: 3px;
}

.nav-tree .leaf svg {
    margin-right: 4px;
}

.nav-tree .leaf::before {
    content: "";
    width: 10px;
    margin: 0 1px 0 7px;
    border-top: 1px dotted #888;
}

.nav-tree .hot {
    background: linear-gradient(90deg, transparent 16px, #e8e8e8 16px);
}

.nav-tree .cad-icon {
    margin: 0 1px 0 5px;
}

.new {
    align-self: flex-start;
    background: #ffe030;
    font: bold italic 9px/9px "Liberation Sans", sans-serif;
}

/* component list */
.list-tools {
    flex: none;
    display: flex;
    align-items: center;
    gap: 7px;
    height: 26px;
    padding: 0 6px;
    background: linear-gradient(#fdfdfd, #f0f0f0);
}

.search {
    flex: none;
    display: flex;
    height: 25px;
    border-bottom: 1px solid #ccc;
}

.search input {
    flex: 1;
    min-width: 0;
    margin-left: 2px;
    padding: 0 2px 1px;
    border: solid #999;
    border-width: 1px 1px 0;
    background: #fff;
}

.search input::placeholder {
    color: #777;
    opacity: 1;
}

.search button {
    display: flex;
    align-items: center;
    width: 25px;
    padding-left: 4px;
    border: 1px solid #e0e0e0;
    background: #fafafa;
}

.search svg {
    width: 16px;
    height: 16px;
}

.comp-tree {
    flex: 1;
    padding: 2px 0;
    border: 1px solid #80848c;
    border-bottom: 0;
    background: #fff;
    margin-left: 1px;
}

.comp-tree li {
    display: flex;
    align-items: center;
    gap: 6px;
    height: 16px;
}

.comp-tree svg {
    flex: none;
    width: 16px;
    height: 16px;
}

.comp-tree .exp {
    width: 8px;
    height: 8px;
}

.comp-tree .gear {
    width: 12px;
    height: 12px;
}

.comp-tree .lv1 {
    gap: 5px;
    padding-left: 9px;
}

.comp-tree .lv2 {
    padding-left: 28px;
    gap: 7px;
}

.comp-tree .lv3 {
    margin-left: 50px;
    border-left: 1px dotted #888;
    gap: 0;
}

.comp-tree .lv3:last-child {
    border-image: linear-gradient(#888 50%, transparent 50%) 1;
}

.comp-tree .lv3::before {
    content: "";
    width: 8px;
    border-top: 1px dotted #888;
}

.item {
    display: flex;
    align-items: center;
    gap: 9px;
    height: 16px;
    padding: 0 3px;
}

.item.picked {
    background: #316ac5;
}

/* drawing area */
.draw {
    display: flex;
    flex-direction: column;
    min-width: 0;
    margin-left: -1px;
}

.row {
    flex: none;
    display: flex;
    gap: 2px;
    height: 28px;
    margin-bottom: 1px;
    padding: 0 1px 0 3px;
}

.row-edit {
    height: 27px;
}

.row-last {
    margin-bottom: 0;
}

.bar-axis {
    flex: none;
    width: 100px;
}

.bar-tail {
    flex: none;
    width: 33px;
}

.blank {
    flex: 1;
    height: 24px;
    background: #fff;
}

.combos {
    display: flex;
    gap: 2px;
    margin: 0 -2px 0 -2px;
}

.combo {
    display: flex;
    align-items: center;
    width: 70px;
    height: 24px;
    padding-right: 4px;
    background: linear-gradient(90deg, #fff 56px, #f6f6f6 56px);
}

.combo.first {
    width: 58px;
}

.combo select {
    flex: 1;
    min-width: 0;
    height: 22px;
    padding-left: 2px;
    appearance: none;
}

.combo.boxed {
    width: 56px;
    margin: 0 -2px 0 -4px;
    padding-right: 2px;
    border: 1px solid #777;
    background: #f2f2f2;
}

.canvas {
    flex: 1;
    min-height: 0;
    margin-left: 1px;
    background: #b8b8b8;
    overflow: hidden;
}

.canvas svg,
.preview svg {
    display: block;
    width: 100%;
    height: 100%;
}

.guide {
    fill: none;
    stroke: #828282;
}

.edge {
    fill: none;
    stroke: #ff00ff;
    stroke-width: 1.5;
}

.bars {
    fill: none;
    stroke: #b054a4;
    stroke-width: 2;
}

.axis {
    fill: none;
    stroke: #f00;
}

.ring {
    fill: none;
    stroke: #008000;
}

.mark {
    fill: #5c5c5c;
    font: 18px "Noto Sans", sans-serif;
}

.mark.light {
    fill: #d0d0d0;
}

/* property editor */
.prop-box {
    flex: none;
    height: 287px;
    padding: 0 2px;
    border: 1px solid #a0a0a0;
    background: #fff;
}

.props {
    width: 100%;
    table-layout: fixed;
    border-collapse: collapse;
    background: #fff;
}

.c-no { width: 20px; }
.c-name { width: 121px; }
.c-add { width: 31px; }

.props th,
.props td {
    height: 19px;
    padding: 0;
    border: 1px solid #c0c0c0;
    font-weight: normal;
    line-height: 16px;
    white-space: nowrap;
}

.props tr > :first-child {
    border-left: 0;
}

.props th {
    background: linear-gradient(#fdfdfd, #ececec);
}

.props tbody th {
    font: 11px/16px "Liberation Mono", monospace;
}

.props thead th {
    height: 22px;
    border-top: 0;
}

.props .val-head {
    background: linear-gradient(#f9d99f, #f1c15f);
    color: #5c0048;
}

.props td:nth-child(2) {
    padding-left: 20px;
}

.props td:nth-child(3) {
    padding-left: 2px;
}

.props td:last-child {
    text-align: center;
}

.current td:nth-child(2) {
    background: #3399ff;
    color: #fff;
}

.current td:nth-child(3) {
    background: #e0f0ff;
}

.props .current th {
    background: #ffd58d;
    color: #5c0048;
}

.dim td {
    color: #808080;
}

.link td {
    color: #00f;
}

.props input {
    display: block;
    width: 13px;
    height: 13px;
    margin: 0 auto;
    appearance: none;
    border: 1px solid #8e8f8f;
    background: linear-gradient(135deg, #ccd0d6, #f8f8f8);
    box-shadow: inset 0 0 0 2px #f4f4f4;
}

.props .group td:nth-child(2) {
    padding-left: 2px;
}

.plus {
    width: 13px;
    height: 13px;
    margin-right: 5px;
    vertical-align: middle;
    border: 1px solid #b8b8b8;
    background:
        linear-gradient(#000, #000) center / 7px 1px no-repeat,
        linear-gradient(#000, #000) center / 1px 7px no-repeat,
        #f0f0f0;
}

.slope {
    flex: none;
    display: flex;
    justify-content: center;
    gap: 24px;
    height: 35px;
    margin: 1px 0 0 1px;
    padding-left: 4px;
    border: 1px solid #fff;
    border-right-color: #999;
    border-bottom-color: #999;
}

.slope label {
    display: flex;
    align-items: center;
    gap: 4px;
}

.slope input {
    width: 12px;
    height: 12px;
    appearance: none;
    border: 1px solid #8e8f8f;
    border-radius: 50%;
    background: radial-gradient(#e8e8e8, #fff);
}

.slope input:checked {
    background: radial-gradient(circle at 5px 5px, #7cd0f4 0 1px, #1c5c94 2px, #103858 3px, #fff 4px);
}

.preview {
    flex: 1;
    min-height: 0;
    margin-left: 1px;
    background: #000;
}

.cad {
    fill: none;
    stroke: #fff;
}

.rebar {
    fill: none;
    stroke: #f00;
    stroke-width: 2;
}

.preview text {
    fill: #fff;
}

.preview .num {
    font: 11px "Liberation Mono", monospace;
}

.preview .cap {
    font: 12px "Noto Sans CJK SC", sans-serif;
}

.preview .tiny {
    font: 5px "Noto Sans", "Noto Sans CJK SC", sans-serif;
}

.preview .g {
    fill: #0f0;
}

/* error window */
.dialog {
    position: absolute;
    left: 60px;
    top: 240px;
    width: 612px;
    height: 330px;
    display: flex;
    flex-direction: column;
    padding: 0 5px 5px 4px;
    border: 1px solid #222;
    box-shadow: inset 0 0 0 1px #f4f4f4;
    background: linear-gradient(90deg, #e4dfdf, #f3eeee 20%, #f3eeee 50%, #e2dfde 53%, #aba7a5 55%, #b0abaa 61%, #bc9c9a 63%, #b4b0ae 65%, #c8c6c4 80%, #d0d0ce);
}

.dialog header {
    flex: none;
    display: flex;
    align-items: center;
    justify-content: space-between;
    height: 24px;
    padding-left: 2px;
}

.dialog h1 {
    font-size: 12px;
}

.close {
    width: 19px;
    height: 19px;
    border: 1px solid #6c4440;
    border-radius: 2px;
    box-shadow: inset 0 0 0 1px #f4b8a8;
    background: linear-gradient(#f0a898, #e08068 48%, #c03c20 50%, #d87050);
}

.close svg {
    display: block;
    width: 8px;
    height: 8px;
    margin: auto;
}

.dialog-body {
    flex: 1;
    display: flex;
    flex-direction: column;
    justify-content: space-between;
    padding: 1px;
    border: 1px solid #000;
    outline: 1px solid #ececec;
    background: #fff;
    box-shadow: inset 0 0 0 1px #fff, inset 0 0 0 2px #848890;
}

.errors {
    width: calc(100% - 3px);
    margin: 2px 2px 0 1px;
    table-layout: fixed;
    border-collapse: collapse;
    text-align: left;
}

.errors .e-name { width: 75px; }
.errors .e-floor { width: 90px; }

.errors th {
    height: 24px;
    padding: 0 6px;
    border-right: 1px solid #e0e0e0;
    border-bottom: 1px solid #d5d5d5;
    background: linear-gradient(#fff 40%, #f3f4f6 42%, #f3f4f6);
    font-weight: normal;
}

.errors th:last-child {
    border-right: 0;
}

.errors td {
    height: 17px;
    padding: 0 6px;
    line-height: 15px;
}

.errors tbody::before {
    content: "";
    display: table-row;
    height: 1px;
}

.errors .picked {
    outline: 1px dotted #000;
    outline-offset: -1px;
    background: linear-gradient(#ebf3fd, #c9e0fb);
}

.scroll {
    display: flex;
    align-items: center;
    height: 17px;
    margin: 0 3px 3px 1px;
    background: #f2f2f2;
}

.scroll button {
    display: flex;
    justify-content: center;
    width: 18px;
}

.scroll button:last-child {
    width: 22px;
}

.scroll svg {
    width: 8px;
    height: 8px;
}

.thumb {
    flex: 1;
    display: flex;
    align-items: center;
    justify-content: center;
    gap: 2px;
    height: 15px;
    border: 1px solid #979797;
    border-radius: 2px;
    background: linear-gradient(#f4f4f4, #e4e4e4 48%, #cfd0d1 50%, #dcdcdc);
}

.thumb i {
    width: 1px;
    height: 7px;
    background: #555;
}
```
